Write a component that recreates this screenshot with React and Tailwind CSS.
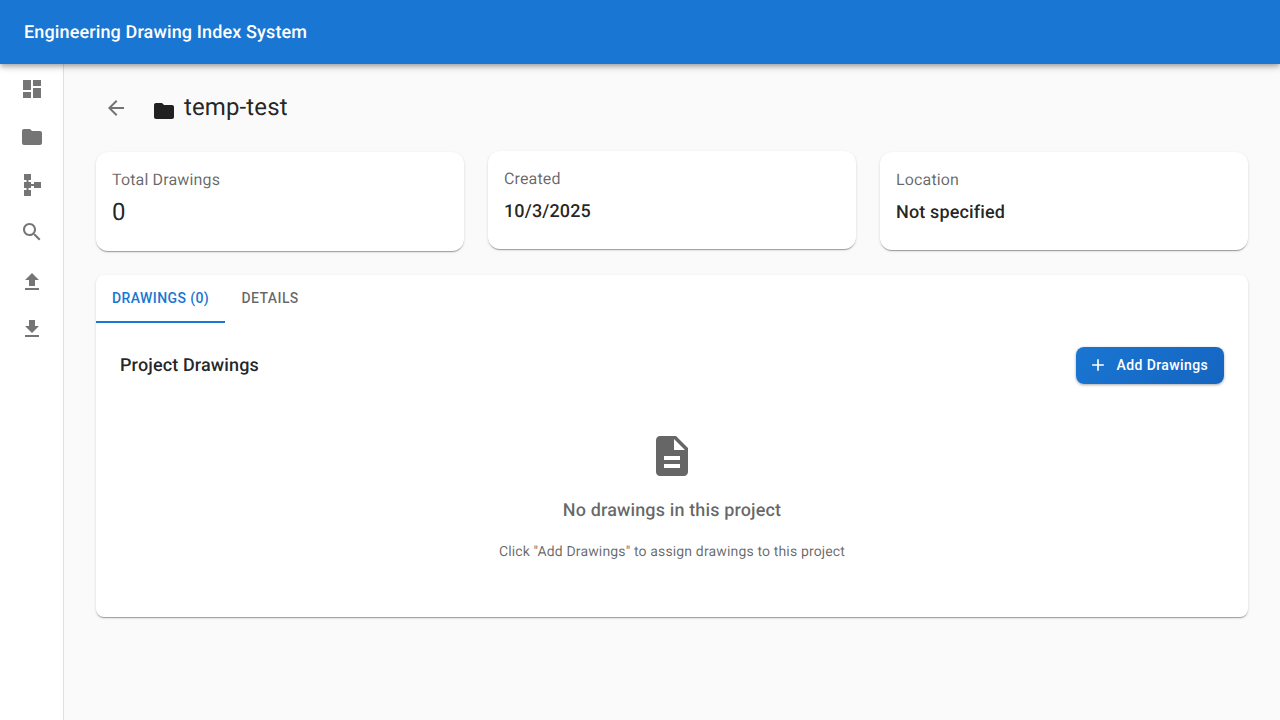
const paths = {
  dashboard: 'M3 13h8V3H3zm0 8h8v-6H3zm10 0h8V11h-8zm0-18v6h8V3z',
  folder: 'M10 4H4c-1.1 0-1.99.9-1.99 2L2 18c0 1.1.9 2 2 2h16c1.1 0 2-.9 2-2V8c0-1.1-.9-2-2-2h-8z',
  schema: 'M14 9v2h-3V9H8.5V7H11V1H4v6h2.5v2H4v6h2.5v2H4v6h7v-6H8.5v-2H11v-2h3v2h7V9z',
  search:
    'M15.5 14h-.79l-.28-.27C15.41 12.59 16 11.11 16 9.5 16 5.91 13.09 3 9.5 3S3 5.91 3 9.5 5.91 16 9.5 16c1.61 0 3.09-.59 4.23-1.57l.27.28v.79l5 4.99L20.49 19zm-6 0C7.01 14 5 11.99 5 9.5S7.01 5 9.5 5 14 7.01 14 9.5 11.99 14 9.5 14',
  upload: 'M5 20h14v-2H5zm0-10h4v6h6v-6h4l-7-7z',
  download: 'M5 20h14v-2H5zM19 9h-4V3H9v6H5l7 7z',
  back: 'M20 11H7.83l5.59-5.59L12 4l-8 8 8 8 1.41-1.41L7.83 13H20z',
  add: 'M19 13h-6v6h-2v-6H5v-2h6V5h2v6h6z',
  description:
    'M14 2H6c-1.1 0-1.99.9-1.99 2L4 20c0 1.1.89 2 1.99 2H18c1.1 0 2-.9 2-2V8zm2 16H8v-2h8zm0-4H8v-2h8zm-3-5V3.5L18.5 9z',
};

function Icon({ name, className = 'size-6' }) {
  return (
    <svg viewBox="0 0 24 24" fill="currentColor" aria-hidden="true" className={`shrink-0 ${className}`}>
      <path d={paths[name]} />
    </svg>
  );
}

const nav = [
  { name: 'dashboard', className: 'size-6' },
  { name: 'folder', className: 'size-6' },
  { name: 'schema', className: 'size-6' },
  { name: 'search', className: 'size-6 -mt-px mb-px' },
  { name: 'upload', className: 'size-6 mt-px -mb-px' },
  { name: 'download', className: 'size-6' },
];

const elevation =
  'shadow-[0px_2px_1px_-1px_rgba(0,0,0,0.2),0px_1px_1px_0px_rgba(0,0,0,0.14),0px_1px_3px_0px_rgba(0,0,0,0.12)]';

function Stat({ label, value, className, valueClass }) {
  return (
    <section className={`rounded-xl bg-white px-4 pt-4 ${elevation} ${className}`}>
      <p className="text-base leading-6 tracking-[0.00938em] text-black/60">{label}</p>
      <p className={valueClass}>{value}</p>
    </section>
  );
}

export default function App() {
  return (
    <div className="flex h-screen flex-col overflow-hidden bg-[#fafafa] font-['Roboto',sans-serif] text-black/87 [text-rendering:geometricPrecision]">
      <header className="z-10 flex h-16 shrink-0 items-center bg-[#1976d2] px-6 text-white shadow-[0px_2px_4px_-1px_rgba(0,0,0,0.2),0px_4px_5px_0px_rgba(0,0,0,0.14),0px_1px_10px_0px_rgba(0,0,0,0.12)]">
        <h1 className="pt-0.5 text-lg font-medium tracking-[0.0075em]">Engineering Drawing Index System</h1>
      </header>
      <div className="flex min-h-0 flex-1">
        <nav className="flex w-16 shrink-0 flex-col border-r border-black/12 bg-white pt-px text-black/54">
          {nav.map((item) => (
            <button key={item.name} aria-label={item.name} className="flex h-12 w-full items-center justify-center pl-px">
              <Icon name={item.name} className={item.className} />
            </button>
          ))}
        </nav>
        <main className="flex-1 px-8 pt-6">
          <div className="flex h-10 items-center">
            <button aria-label="back" className="mr-4 flex size-10 items-center justify-center text-black/54">
              <Icon name="back" className="size-6" />
            </button>
            <Icon name="folder" className="mt-1.5 mr-2 size-6" />
            <h2 className="-mt-0.5 text-2xl leading-8 tracking-[0.005em]">temp-test</h2>
          </div>
          <div className="mt-6 grid h-[99px] grid-cols-3 items-start gap-6">
            <Stat label="Total Drawings" value="0" className="h-[99px]" valueClass="mt-1 text-2xl leading-8" />
            <Stat
              label="Created"
              value="10/3/2025"
              className="-mt-px h-[97.5px]"
              valueClass="mt-[5px] text-lg leading-8 font-medium tracking-[0.0075em]"
            />
            <Stat
              label="Location"
              value="Not specified"
              className="h-[98px]"
              valueClass="mt-[5px] text-lg leading-8 font-medium tracking-[0.0075em]"
            />
          </div>
          <section className={`mt-6 h-[342px] overflow-hidden rounded-lg bg-white ${elevation}`}>
            <div className="flex h-12 text-sm font-medium tracking-[0.02857em]">
              <button className="border-b-2 border-[#1976d2] px-4 text-[#1976d2]">DRAWINGS (0)</button>
              <button className="border-b-2 border-transparent px-[16.5px] text-black/60">DETAILS</button>
            </div>
            <div className="p-6">
              <div className="flex items-center justify-between">
                <h3 className="text-lg font-medium tracking-[0.0075em]">Project Drawings</h3>
                <button className="flex h-[37px] w-[148px] items-center gap-[8.5px] rounded-lg bg-linear-135 from-[#1976d2] to-[#1565c0] pl-3 text-sm font-medium tracking-[0.02857em] whitespace-nowrap text-white shadow-[0px_1px_3px_rgba(0,0,0,0.35)]">
                  <Icon name="add" className="-mt-px size-5" />
                  <span className="-mt-px">Add Drawings</span>
                </button>
              </div>
              <div className="flex flex-col items-center pt-12 text-black/60">
                <Icon name="description" className="size-12" />
                <h4 className="mt-[17px] text-lg leading-7 font-medium tracking-[0.0075em]">No drawings in this project</h4>
                <p className="mt-[17px] text-sm leading-5 tracking-[0.01071em]">
                  Click "Add Drawings" to assign drawings to this project
                </p>
              </div>
            </div>
          </section>
        </main>
      </div>
    </div>
  );
}
